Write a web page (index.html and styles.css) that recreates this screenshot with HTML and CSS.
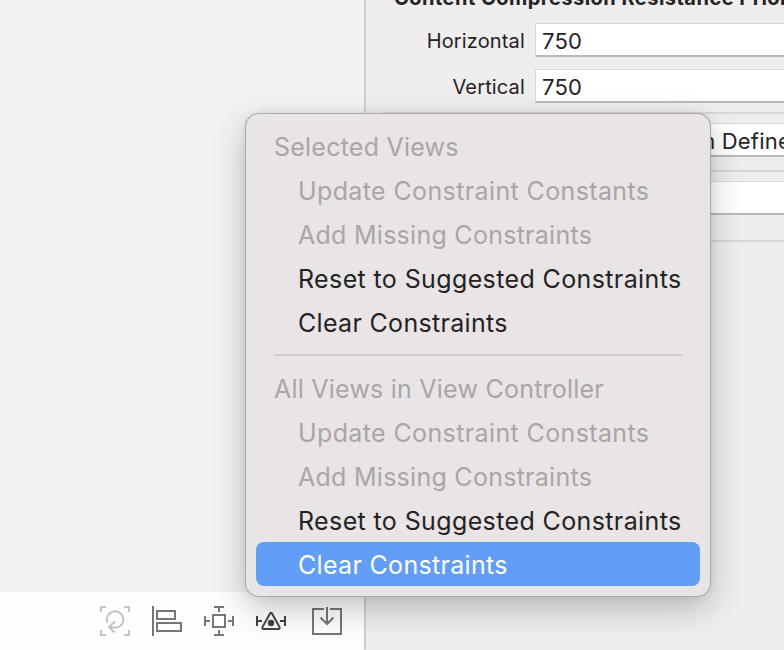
FILE: index.html
```html
<!DOCTYPE html>
<html lang="en">
<head>
<meta charset="utf-8">
<title>Resolve Auto Layout Issues</title>
<link rel="stylesheet" href="styles.css">
</head>
<body>
<div class="window">
  <section class="editor">
    <div class="canvas"></div>
    <div class="toolbar">
      <svg class="icon dim" viewBox="0 0 32 32"><path d="M2 7V2h5M25 2h5v5M30 25v5h-5M7 30H2v-5"/><path d="M8.300 17.500A8.300 8.300 0 1 1 17.500 22.700L10 22M16 16.500L10 22L15.500 27.500"/></svg>
      <svg class="icon" viewBox="0 0 32 32"><path d="M2 1v30M6 6h18v8H6zM6 18h24v8H6z"/></svg>
      <svg class="icon" viewBox="0 0 32 32"><path d="M10 10h12v12H10zM16 2v5M11 2h10M16 25v5M11 30h10M2 11v10M2 16h5M30 11v10M25 16h5"/></svg>
      <svg class="icon dark" viewBox="0 0 32 32"><path d="M2 11v10M2 16h5M30 11v10M25 16h5"/><path d="M15 8.500Q16 7 17 8.500L24.500 22Q25 24 23.500 24H8.500Q7 24 7.500 22Z"/><circle cx="16" cy="18" r="3.200"/></svg>
      <svg class="icon drop" viewBox="0 0 32 32"><path d="M13 4H2v25h28V4H19M16 2v16M9.500 12.500L16 19l6.500-6.500"/></svg>
    </div>
  </section>
  <aside class="inspector">
    <h2>Content Compression Resistance Priority</h2>
    <div class="field"><span class="label">Horizontal</span><span class="value">750</span></div>
    <div class="field"><span class="label">Vertical</span><span class="value">750</span></div>
    <hr>
    <div class="field choice"><span class="value">System Defined</span></div>
    <hr>
    <div class="field empty"><span class="value"></span></div>
    <hr class="last">
  </aside>
  <div class="menu">
    <div class="heading selected-views">Selected Views</div>
    <div class="item disabled update">Update Constraint Constants</div>
    <div class="item disabled add">Add Missing Constraints</div>
    <div class="item">Reset to Suggested Constraints</div>
    <div class="item clear">Clear Constraints</div>
    <div class="separator"></div>
    <div class="heading">All Views in View Controller</div>
    <div class="item disabled update">Update Constraint Constants</div>
    <div class="item disabled add">Add Missing Constraints</div>
    <div class="item">Reset to Suggested Constraints</div>
    <div class="item clear active">Clear Constraints</div>
  </div>
</div>
</body>
</html>
```

FILE: styles.css
```css
* { box-sizing: border-box; }
body {
  margin: 0;
  overflow: hidden;
  font-family: Inter, "Liberation Sans", sans-serif;
  color: #242324;
}
.window {
  position: relative;
  display: flex;
  width: 784px;
  height: 650px;
  overflow: hidden;
  background: #efedee;
}
.editor { display: flex; flex-direction: column; width: 364px; }
.canvas { flex: 1; background: #f2f2f2; }
.toolbar {
  display: flex;
  gap: 20px;
  height: 58px;
  padding: 13px 0 0 99px;
  background: #fefefe;
}
.icon {
  width: 32px;
  height: 32px;
  flex: none;
  fill: none;
  stroke: #777677;
  stroke-width: 2;
}
.dim { stroke: #c4c3c4; }
.dark { stroke: #444344; }
.dark circle { fill: #444344; stroke: none; }
.drop { margin-left: 4px; }
.inspector { flex: 1; min-width: 0; border-left: 2px solid #d1cfd0; }
h2 {
  margin: -13px 0 13px 28px;
  font-size: 20px;
  line-height: 23px;
  font-weight: 650;
  letter-spacing: 0.48px;
  white-space: nowrap;
}
.field { display: flex; height: 34px; margin-bottom: 12px; }
.label {
  width: 169px;
  padding-right: 10px;
  text-align: right;
  font-size: 20px;
  line-height: 36px;
  letter-spacing: 0.15px;
}
.value {
  flex: 1;
  padding-left: 6px;
  background: #fff;
  border: 1px solid #dad8d9;
  border-right: 0;
  border-bottom: 2px solid #bab8b9;
  font-size: 22px;
  line-height: 34px;
  letter-spacing: 0.2px;
  white-space: nowrap;
}
hr { height: 2px; margin: -3px 0 9px 16px; border: 0; background: #d8d6d7; }
.choice { margin: 0 0 16px 233px; }
.choice .value { padding-left: 37px; }
.empty { margin: 0 0 28px 169px; }
.menu {
  position: absolute;
  left: 246px;
  top: 114px;
  width: 464px;
  height: 482px;
  padding: 10px;
  border-radius: 13px;
  background: #e9e4e6;
  box-shadow: 0 0 0 1px #aaa8a9, 0 12px 34px rgba(0,0,0,.24), 0 0 10px rgba(0,0,0,.08);
  font-size: 25px;
  line-height: 46px;
  letter-spacing: 0.38px;
  white-space: nowrap;
}
.heading, .item { height: 44px; }
.heading { padding-left: 18px; color: #aaa5a7; letter-spacing: 0.23px; }
.item { padding-left: 42px; }
.disabled { color: #aaa5a7; }
.add { letter-spacing: 0.27px; }
.clear { letter-spacing: 0.32px; }
.separator { height: 2px; margin: 10px 18px; background: #d0cbcd; }
.active { border-radius: 8px; background: #629df8; color: #fff; }
```
